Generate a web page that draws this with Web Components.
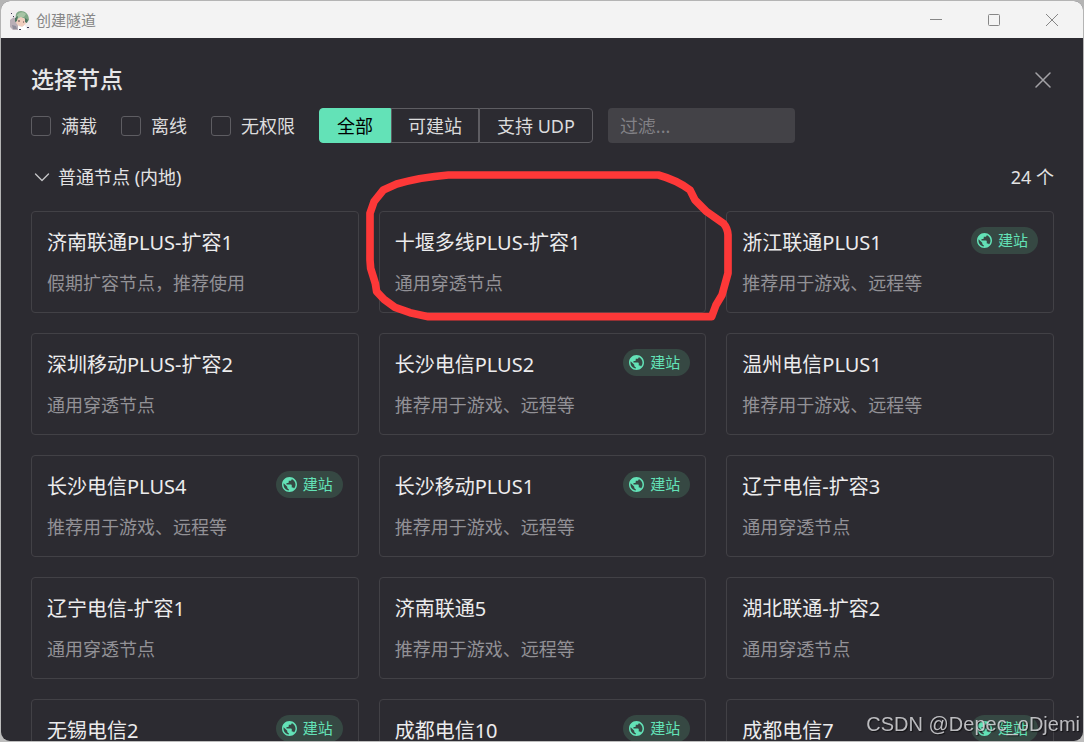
<!DOCTYPE html>
<html lang="zh-CN">
<head>
<meta charset="utf-8">
<meta name="viewport" content="width=device-width, initial-scale=1">
<title>创建隧道</title>
<style>
  html, body { height: 100%; }
  body {
    margin: 0;
    overflow: hidden;
    background: linear-gradient(#b4b4b4 0 180px, #bdbdbd);
    font-family: "Noto Sans", "Noto Sans CJK SC", sans-serif;
    font-size: 18px;
    color: #e3e3e4;
    --accent: #63e2b7;
    --surface: #2c2b31;
    --line: #424146;
    --line-strong: #5e5d62;
    --muted: #929196;
  }
</style>
</head>
<body>
<app-window caption="创建隧道">
  <node-picker heading="选择节点">
    <check-filter slot="filters">满载</check-filter>
    <check-filter slot="filters">离线</check-filter>
    <check-filter slot="filters">无权限</check-filter>
    <segment-group slot="filters" options="全部,可建站,支持 UDP"></segment-group>
    <filter-box slot="filters" hint="过滤..."></filter-box>
    <node-section heading="普通节点 (内地)" count="24 个">
      <node-card name="济南联通PLUS-扩容1">假期扩容节点，推荐使用</node-card>
      <node-card name="十堰多线PLUS-扩容1" marked>通用穿透节点</node-card>
      <node-card name="浙江联通PLUS1" site>推荐用于游戏、远程等</node-card>
      <node-card name="深圳移动PLUS-扩容2">通用穿透节点</node-card>
      <node-card name="长沙电信PLUS2" site>推荐用于游戏、远程等</node-card>
      <node-card name="温州电信PLUS1">推荐用于游戏、远程等</node-card>
      <node-card name="长沙电信PLUS4" site>推荐用于游戏、远程等</node-card>
      <node-card name="长沙移动PLUS1" site>推荐用于游戏、远程等</node-card>
      <node-card name="辽宁电信-扩容3">通用穿透节点</node-card>
      <node-card name="辽宁电信-扩容1">通用穿透节点</node-card>
      <node-card name="济南联通5">推荐用于游戏、远程等</node-card>
      <node-card name="湖北联通-扩容2">通用穿透节点</node-card>
      <node-card name="无锡电信2" site></node-card>
      <node-card name="成都电信10" site></node-card>
      <node-card name="成都电信7" site></node-card>
    </node-section>
  </node-picker>
</app-window>
<water-mark>CSDN @Depec_oDjemi</water-mark>

<script>
class Base extends HTMLElement {
  connectedCallback() {
    if (this.shadowRoot) return;
    this.attachShadow({ mode: 'open' }).innerHTML =
      '<style>*{box-sizing:border-box}button,input{font:inherit;color:inherit;margin:0}</style>' + this.render();
  }
  attr(n) { return this.getAttribute(n) || ''; }
}

customElements.define('app-window', class extends Base {
  render() { return `
    <style>
      :host { display: block; height: 100vh; padding: 1px; box-sizing: border-box; }
      .frame { height: 100%; display: flex; flex-direction: column; border-radius: 9px; overflow: hidden; background: var(--surface); }
      header { flex: none; height: 37px; display: flex; align-items: center; background: #f3f3f3; color: #868686; padding: 0 2px 0 9px; }
      .pic { width: 20px; height: 20px; margin-right: 6px; }
      .cap { flex: 1; font-size: 15px; line-height: 20px; }
      button { width: 58px; height: 36px; border: 0; padding: 0; background: none; display: grid; place-items: center; }
      main { flex: 1; min-height: 0; }
    </style>
    <div class="frame">
      <header>
        <svg class="pic" viewBox="0 0 20 20" aria-hidden="true">
          <rect width="20" height="20" fill="#f1ecee"/>
          <path d="M0 10l4-3 3 5 2 8H3L0 17z" fill="#b9aeb6"/>
          <path d="M6 8C5 4 7 1 11 1s8 3 8 9l-3 3-2-5-6 1z" fill="#7fa685"/>
          <path d="M7 5c2-3 6-4 9-1l-2 3-6 2z" fill="#a7c3a4"/>
          <path d="M7 9l4-2 4 2 1 4-3 4-4-1-3-3z" fill="#f0cdbd"/>
          <path d="M5 8l3-2-1 5-2 1zM15 8l3 2-1 3-2-1z" fill="#4f7560"/>
          <path d="M8 11h2M13 12h1" stroke="#5d4346"/>
          <path d="M8 16l4 1 3-2 2 5H8z" fill="#fff"/>
          <path d="M2 15l4 1 1 3H3z" fill="#8f8c9a"/>
          <path d="M17 17h2v1h-2zM1 3h1v1H1zM3 6h1v1H3zM9 19h2v1H9z" fill="#3b3752"/>
        </svg>
        <span class="cap">${this.attr('caption')}</span>
        <button aria-label="最小化"><svg width="14" height="14" viewBox="0 0 14 14" stroke="#868686" fill="none"><path d="M1 6.5h12"/></svg></button>
        <button aria-label="最大化"><svg width="14" height="14" viewBox="0 0 14 14" stroke="#868686" fill="none"><rect x="1.5" y="1.5" width="11" height="11" rx="1"/></svg></button>
        <button aria-label="关闭窗口"><svg width="14" height="14" viewBox="0 0 14 14" stroke="#868686" fill="none"><path d="M1 1l12 12M13 1L1 13"/></svg></button>
      </header>
      <main><slot></slot></main>
    </div>`; }
});

customElements.define('node-picker', class extends Base {
  render() { return `
    <style>
      :host { display: flex; flex-direction: column; height: 100%; }
      .top { display: flex; align-items: flex-start; justify-content: space-between; padding: 24px 30px 0; }
      h1 { margin: 0; font-size: 23px; line-height: 34px; font-weight: 500; color: #e6e6e7; }
      .top button { border: 0; background: none; padding: 0; width: 20px; height: 36px; display: grid; place-items: center; color: #a3a2a6; }
      .filters { display: flex; align-items: center; flex-wrap: wrap; gap: 24px; padding: 10px 30px 16px; }
      .list { flex: 1; min-height: 0; overflow-y: auto; scrollbar-width: none; padding: 0 29px 0 30px; }
    </style>
    <div class="top">
      <h1>${this.attr('heading')}</h1>
      <button aria-label="关闭"><svg width="16" height="16" viewBox="0 0 16 16" stroke="currentColor" stroke-width="1.5" stroke-linecap="round"><path d="M1 1l14 14M15 1L1 15"/></svg></button>
    </div>
    <div class="filters"><slot name="filters"></slot></div>
    <div class="list"><slot></slot></div>`; }
});

customElements.define('check-filter', class extends Base {
  render() { return `
    <style>
      :host { display: block; }
      label { display: flex; align-items: center; gap: 10px; line-height: 28px; color: #dcdcdd; }
      input { appearance: none; width: 20px; height: 20px; border: 1px solid var(--line-strong); border-radius: 3px; }
      input:checked { background: var(--accent); }
    </style>
    <label><input type="checkbox"><slot></slot></label>`; }
});

customElements.define('segment-group', class extends Base {
  render() {
    const items = this.attr('options').split(',');
    return `
    <style>
      :host { display: flex; height: 35px; }
      button { height: 35px; padding: 0 17px; line-height: 28px; background: none; border: 1px solid var(--line-strong); color: #dcdcdd; }
      button:nth-of-type(2) { padding: 0 16px; }
      button:first-of-type { border-radius: 4px 0 0 4px; }
      button:last-of-type { border-radius: 0 4px 4px 0; }
      button[aria-pressed=true] { background: var(--accent); border-color: var(--accent); color: #000; }
    </style>
    ${items.map((t, i) => `<button aria-pressed="${i === 0}">${t}</button>`).join('')}`; }
});

customElements.define('filter-box', class extends Base {
  render() { return `
    <style>
      :host { display: block; margin-left: -9px; }
      input { display: block; width: 187px; height: 35px; border: 0; border-radius: 4px; padding: 0 12px; background: #434247; }
      input::placeholder { color: #828186; opacity: 1; }
    </style>
    <input type="text" aria-label="过滤节点" placeholder="${this.attr('hint')}">`; }
});

customElements.define('node-section', class extends Base {
  render() { return `
    <style>
      :host { display: block; padding-top: 4px; }
      .head { width: 100%; display: flex; align-items: center; border: 0; background: none; padding: 0 0 0 3px; line-height: 28px; color: #e3e3e4; }
      svg { margin-right: 8px; }
      .name { flex: 1; text-align: left; }
      .grid { display: grid; grid-template-columns: repeat(3, minmax(0, 1fr)); gap: 20px; padding: 20px 0; }
    </style>
    <button class="head" aria-expanded="true">
      <svg width="16" height="16" viewBox="0 0 16 16" fill="none" stroke="#c4c4c6" stroke-width="1.4" stroke-linecap="round" stroke-linejoin="round"><path d="M1.5 5L8 11.5 14.5 5"/></svg>
      <span class="name">${this.attr('heading')}</span>
      <span>${this.attr('count')}</span>
    </button>
    <div class="grid"><slot></slot></div>`; }
});

customElements.define('site-tag', class extends Base {
  render() { return `
    <style>
      :host { display: flex; flex: none; align-items: center; gap: 6px; width: 67px; height: 27px; padding: 0 6px; box-sizing: border-box; border-radius: 14px; background: #364843; color: var(--accent); font-size: 15px; line-height: 27px; }
      svg { flex: none; }
    </style>
    <svg width="15" height="15" viewBox="2 2 20 20" fill="currentColor" aria-hidden="true"><path d="M12 2C6.48 2 2 6.48 2 12s4.48 10 10 10 10-4.48 10-10S17.52 2 12 2zm-1 17.93c-3.95-.49-7-3.85-7-7.93 0-.62.08-1.21.21-1.79L9 15v1c0 1.1.9 2 2 2v1.93zm6.9-2.54c-.26-.81-1-1.39-1.9-1.39h-1v-3c0-.55-.45-1-1-1H8v-2h2c.55 0 1-.45 1-1V7h2c1.1 0 2-.9 2-2v-.41c2.93 1.19 5 4.06 5 7.41 0 2.08-.8 3.97-2.1 5.39z"/></svg>
    <slot></slot>`; }
});

customElements.define('node-card', class extends Base {
  render() { return `
    <style>
      :host { display: block; position: relative; box-sizing: border-box; min-height: 102px; padding: 15px; border: 1px solid var(--line); border-radius: 4px; }
      :host([marked]) { z-index: 1; }
      .row { display: flex; align-items: flex-start; justify-content: space-between; }
      h2 { margin: 0; font-size: 20px; line-height: 32px; font-weight: 400; color: #ececed; white-space: nowrap; }
      p { margin: 12px 0 0; line-height: 24px; color: var(--muted); }
      .ring { position: absolute; left: -20px; top: -52px; width: 380px; height: 170px; pointer-events: none; }
    </style>
    <div class="row"><h2>${this.attr('name')}</h2>${this.hasAttribute('site') ? '<site-tag>建站</site-tag>' : ''}</div>
    <p><slot></slot></p>
    ${this.hasAttribute('marked') ? `<svg class="ring" viewBox="0 0 1140 510" fill="none" stroke="#fd3838" stroke-width="23" stroke-linejoin="round" aria-hidden="true"><path d="M265 45H895Q950 60 990 90L1005 120 1040 155 1090 190Q1103 205 1104 225V340L1086 405 1068 435 1055 470H205L150 458 105 442 72 418 50 395 46 370 32 325 30 300V160L42 125 70 90 110 72Q180 52 265 45Z"/></svg>` : ''}`; }
});

customElements.define('water-mark', class extends Base {
  render() { return `
    <style>
      :host { position: fixed; right: 4px; bottom: 6px; z-index: 5; font: 20px/24px "Liberation Sans", sans-serif; color: rgba(215,215,218,.85); text-shadow: 1px 1px 1px rgba(0,0,0,.6); pointer-events: none; white-space: nowrap; }
    </style>
    <slot></slot>`; }
});
</script>
</body>
</html>
